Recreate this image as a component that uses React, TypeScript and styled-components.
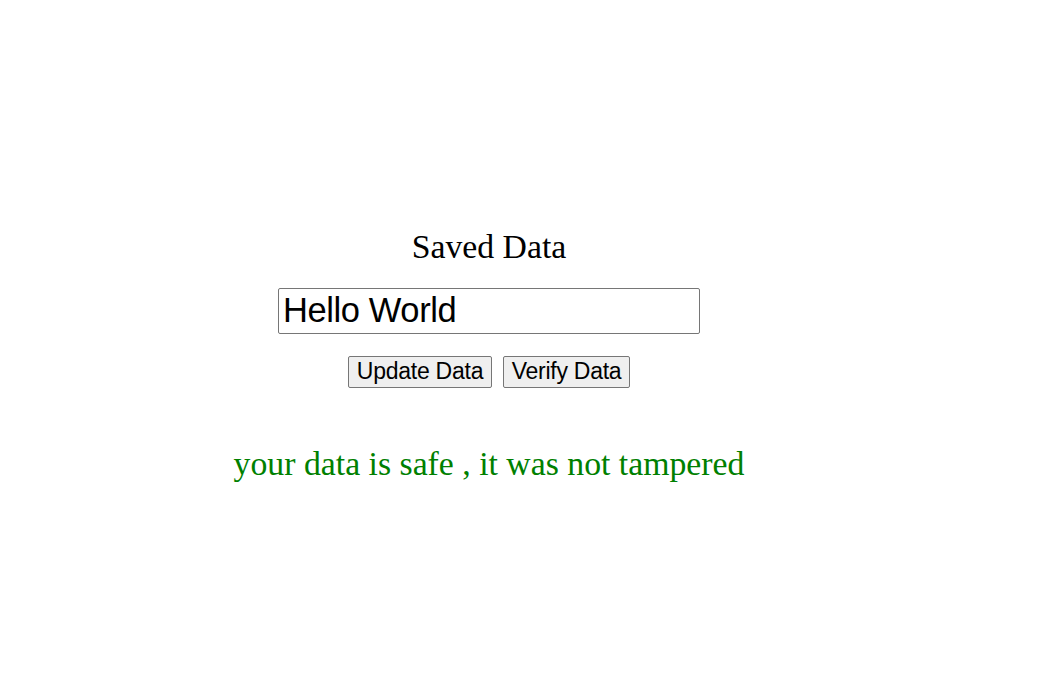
import React, { useState } from "react";
import styled, { createGlobalStyle } from "styled-components";

const GlobalStyle = createGlobalStyle`
  * { box-sizing: border-box; }
  body { margin: 0; background: #fff; }
`;

const Page = styled.main`
  display: flex;
  flex-direction: column;
  align-items: center;
  width: 978px;
  height: 696px;
  padding-top: 227px;
  overflow: hidden;
  font-family: "Liberation Serif", "Times New Roman", serif;
  font-size: 33.75px;
  line-height: 40px;
  color: #000;
`;

const Title = styled.div`
  height: 40px;
  white-space: nowrap;
`;

const DataInput = styled.input`
  width: 422px;
  height: 46px;
  margin: 21px 0 22px;
  padding: 0 4px 2px;
  border: 1px solid #767676;
  border-radius: 2px;
  outline: none;
  background: #fff;
  font-family: "Liberation Sans", Arial, sans-serif;
  font-size: 34.5px;
  letter-spacing: -0.4px;
  color: #000;
`;

const Actions = styled.div`
  display: flex;
  gap: 11px;
`;

const ActionButton = styled.button<{ $width: number }>`
  width: ${({ $width }) => $width}px;
  height: 32px;
  padding: 0 0 2px;
  border: 1px solid #767676;
  border-radius: 2px;
  background: #efefef;
  font-family: "Liberation Sans", Arial, sans-serif;
  font-size: 23px;
  letter-spacing: -0.25px;
  line-height: 28px;
  white-space: nowrap;
  color: #000;
`;

const Status = styled.div`
  height: 40px;
  margin-top: 56px;
  white-space: nowrap;
  color: #008000;
`;

export default function App() {
  const [data, setData] = useState("Hello World");
  return (
    <Page>
      <GlobalStyle />
      <Title>Saved Data</Title>
      <DataInput
        type="text"
        aria-label="Saved Data"
        value={data}
        onChange={(event) => setData(event.target.value)}
      />
      <Actions>
        <ActionButton $width={144}>Update Data</ActionButton>
        <ActionButton $width={127}>Verify Data</ActionButton>
      </Actions>
      <Status>your data is safe , it was not tampered</Status>
    </Page>
  );
}
